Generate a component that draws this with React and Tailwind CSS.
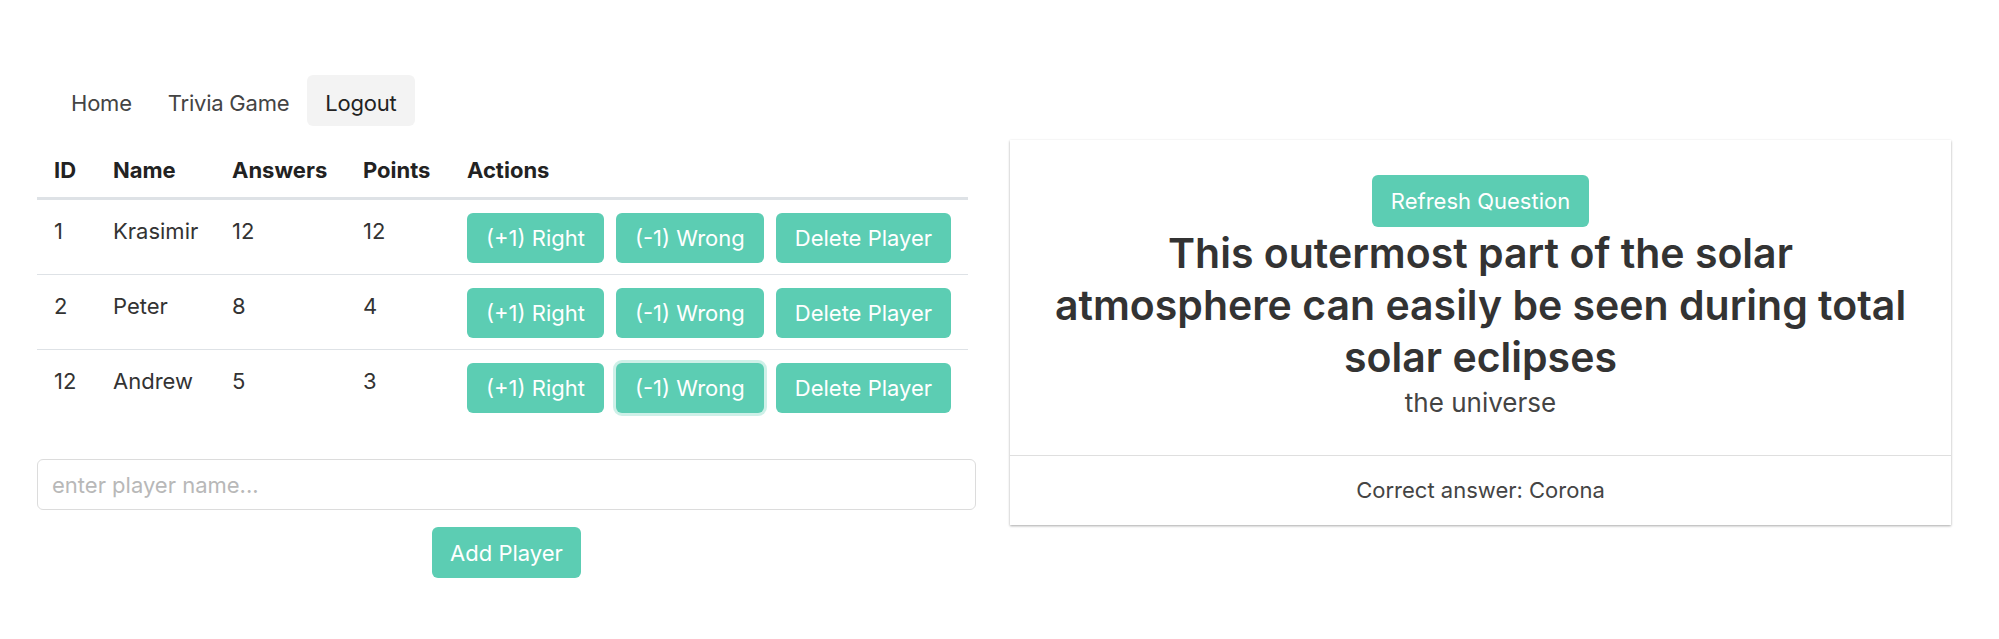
import React from 'react';

const players = [
  { id: 1, name: 'Krasimir', answers: 12, points: 12 },
  { id: 2, name: 'Peter', answers: 8, points: 4 },
  { id: 12, name: 'Andrew', answers: 5, points: 3 },
];

const btn =
  'h-[50px] px-[19px] rounded-[6px] bg-[#5ccdb3] text-white text-[22px] leading-[32px] whitespace-nowrap';

const NavBar = () => (
  <nav className="ml-[16px] flex text-[22px] leading-[32px] tracking-[-0.01em]">
    <a className="px-[18px] pt-[12px] pb-[7px] text-[#444]">Home</a>
    <a className="px-[18px] pt-[12px] pb-[7px] text-[#444]">Trivia Game</a>
    <a className="px-[18px] pt-[12px] pb-[7px] text-[#222] bg-[#f3f3f3] rounded-[6px]">Logout</a>
  </nav>
);

const PlayersTable = () => (
  <table className="mt-[3px] w-[931px] table-fixed border-collapse text-left text-[22px]">
    <thead>
      <tr className="border-b-[3px] border-[#dee2e6] text-[#222]">
        <th className="w-[59px] pl-[17px] pt-[11px] pb-[11px] leading-[32px] font-bold">ID</th>
        <th className="w-[119px] pl-[17px] pt-[11px] pb-[11px] leading-[32px] font-bold">Name</th>
        <th className="w-[131px] pl-[17px] pt-[11px] pb-[11px] leading-[32px] font-bold">Answers</th>
        <th className="w-[104px] pl-[17px] pt-[11px] pb-[11px] leading-[32px] font-bold">Points</th>
        <th className="pl-[17px] pt-[11px] pb-[11px] leading-[32px] font-bold">Actions</th>
      </tr>
    </thead>
    <tbody className="text-[#333]">
      {players.map((p, i) => (
        <tr key={p.id} className={i < players.length - 1 ? 'border-b border-[#dee2e6]' : ''}>
          <td className="pl-[17px] pt-[14px] pb-[11px] align-top leading-[34px]">{p.id}</td>
          <td className="pl-[17px] pt-[14px] pb-[11px] align-top leading-[34px]">{p.name}</td>
          <td className="pl-[17px] pt-[14px] pb-[11px] align-top leading-[34px]">{p.answers}</td>
          <td className="pl-[17px] pt-[14px] pb-[11px] align-top leading-[34px]">{p.points}</td>
          <td className="pl-[17px] pt-[13px] pb-[11px] align-top">
            <div className="flex gap-3">
              <button className={btn}>(+1) Right</button>
              <button className={i === 2 ? btn + ' ring-[3px] ring-[#5ccdb3]/30' : btn}>
                (-1) Wrong
              </button>
              <button className={btn}>Delete Player</button>
            </div>
          </td>
        </tr>
      ))}
    </tbody>
  </table>
);

const QuestionCard = () => (
  <div className="w-[941px] bg-white shadow-[0_1px_3px_rgba(0,0,0,0.12),0_1px_2px_rgba(0,0,0,0.24)]">
    <div className="px-[28px] pt-[35px] pb-[33px] flex flex-col items-center text-center">
      <button className="h-[52px] px-[19px] rounded-[6px] bg-[#5ccdb3] text-white text-[22px] leading-[32px]">
        Refresh Question
      </button>
      <h2 className="text-[41px] leading-[52px] font-semibold text-[#333]">
        This outermost part of the solar
        <br />
        atmosphere can easily be seen during total
        <br />
        solar eclipses
      </h2>
      <p className="text-[26px] leading-[39px] text-[#444]">the universe</p>
    </div>
    <div className="h-[70px] border-t border-[#dfdfdf] flex items-center justify-center text-[22px] text-[#444]">
      Correct answer: Corona
    </div>
  </div>
);

export default function App() {
  return (
    <div className="min-h-screen bg-white pt-[75px] pl-[37px] pr-[48px] font-['Inter','Noto_Sans',sans-serif]">
      <NavBar />
      <div className="mt-[14px] flex items-start gap-[34px]">
        <div className="w-[939px] flex flex-col">
          <PlayersTable />
          <input
            className="mt-[35px] h-[51px] w-full rounded-[6px] border border-[#dcdcdc] px-[14px] text-[22px] text-[#333] placeholder:text-[#b8b8b8] outline-none"
            placeholder="enter player name..."
          />
          <div className="mt-[17px] flex justify-center">
            <button className="h-[51px] px-[18px] rounded-[6px] bg-[#5ccdb3] text-white text-[22px] leading-[32px]">
              Add Player
            </button>
          </div>
        </div>
        <QuestionCard />
      </div>
    </div>
  );
}
